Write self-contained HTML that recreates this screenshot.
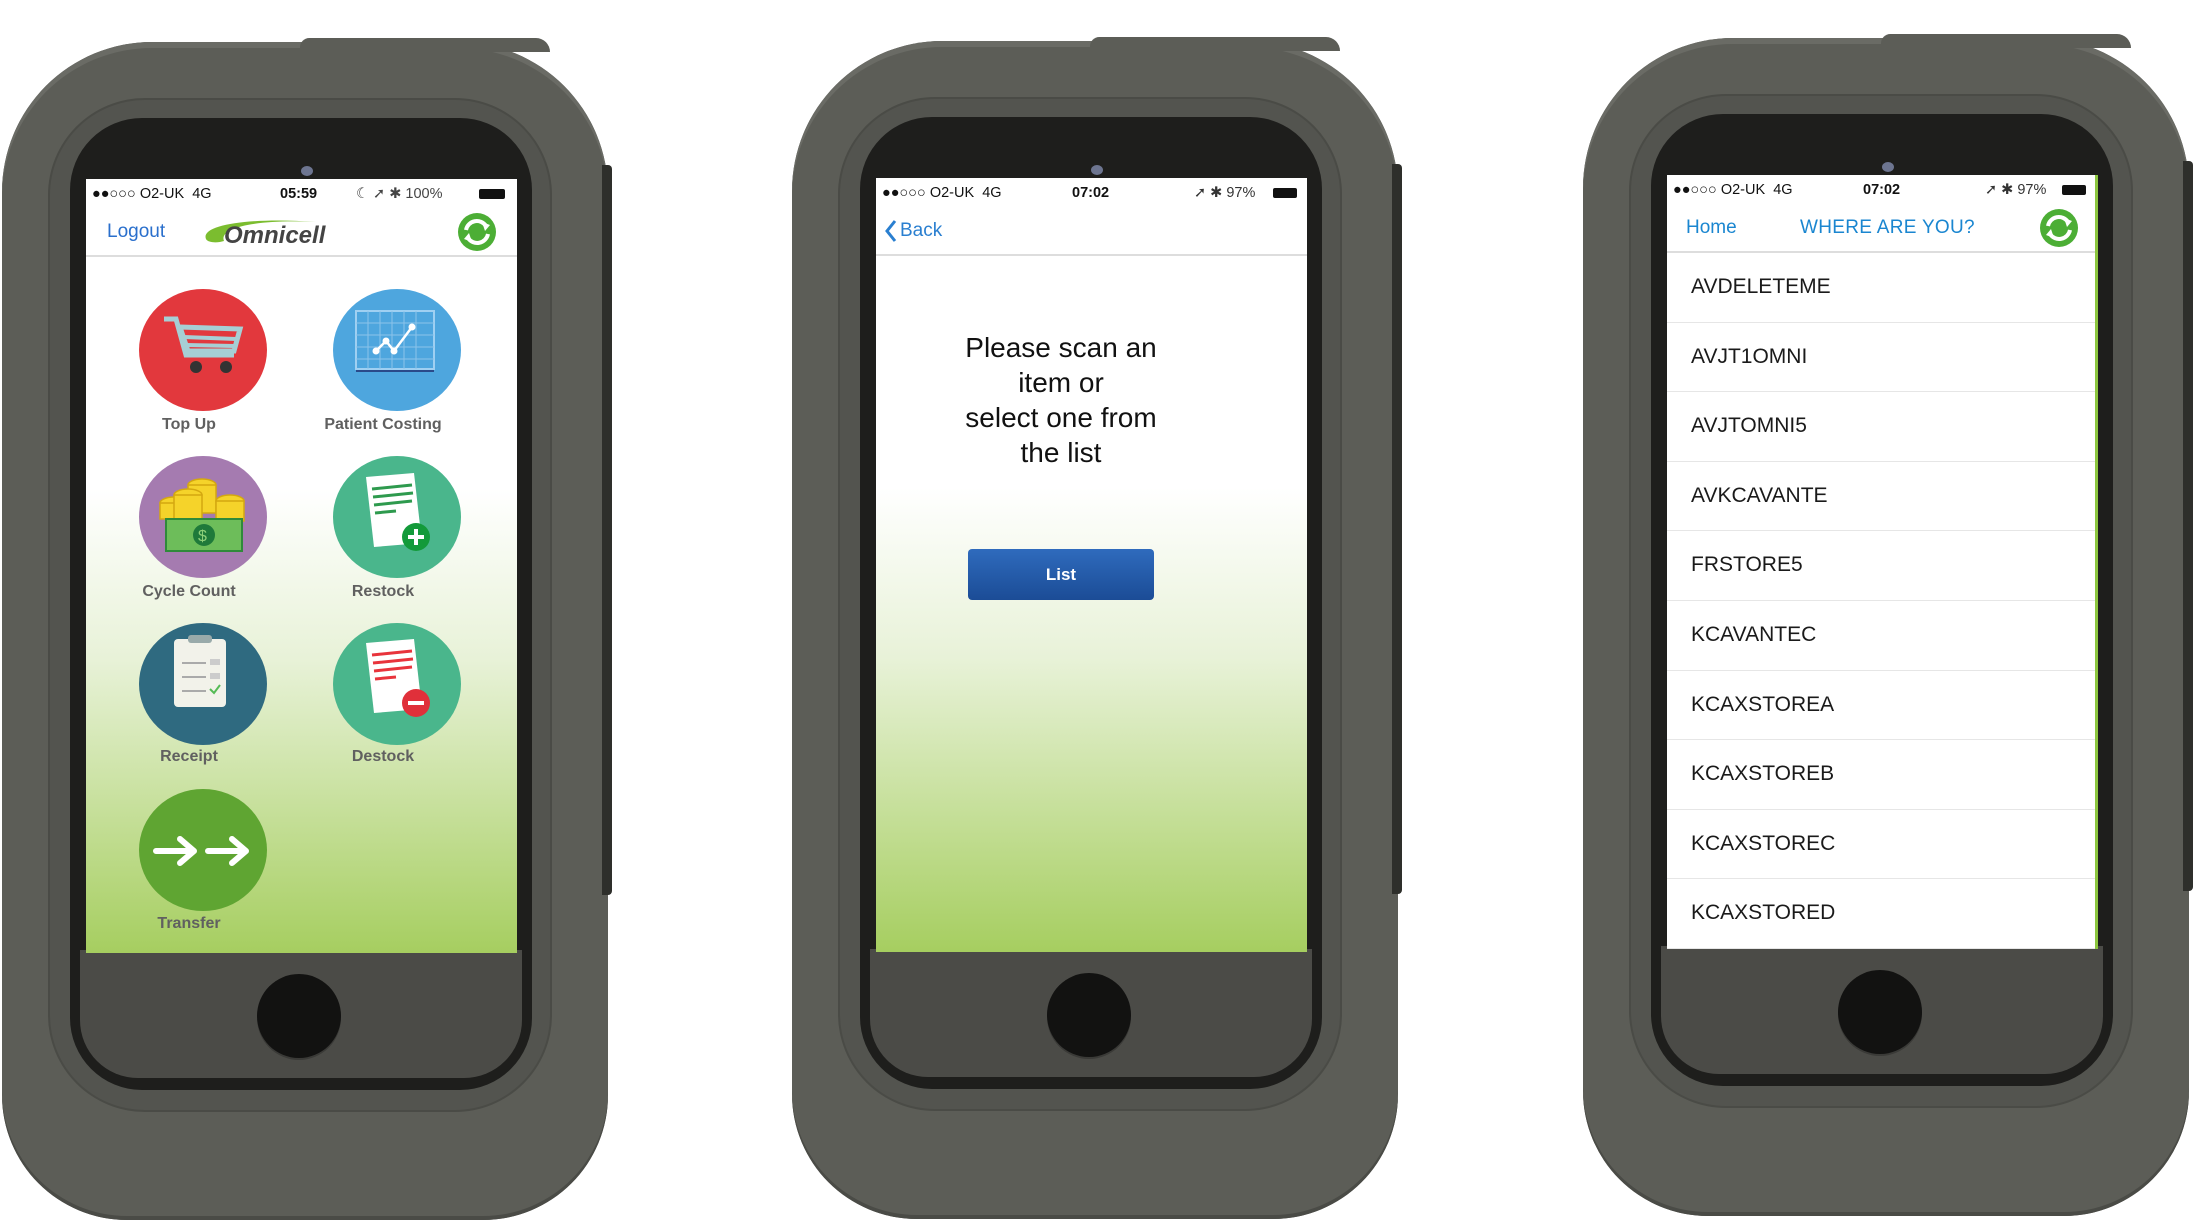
<!DOCTYPE html>
<html><head><meta charset="utf-8"><style>
*{margin:0;padding:0;box-sizing:border-box}
body{width:2198px;height:1221px;background:#fff;position:relative;overflow:hidden;font-family:"Liberation Sans",sans-serif}
.ph{position:absolute;top:0;width:620px;height:1221px}
.case{position:absolute;left:2px;top:42px;width:606px;height:1178px;border-radius:150px 150px 125px 125px;background:#5c5d57;box-shadow:inset 0 6px 0 #6a6b65,inset 0 -4px 0 #4a4b46}
.topbtn{position:absolute;left:300px;top:38px;width:250px;height:14px;background:#5c5d57;border-radius:40px 60px 0 0}
.side{position:absolute;left:602px;top:165px;width:10px;height:730px;background:#2e2f2b;border-radius:0 4px 4px 0}
.ring{position:absolute;left:50px;top:100px;width:500px;height:1010px;border-radius:95px;background:#53544f;box-shadow:0 0 0 2px #4a4b46}
.bez{position:absolute;left:70px;top:118px;width:462px;height:972px;border-radius:72px;background:#1e1e1c}
.home{position:absolute;left:80px;top:950px;width:442px;height:128px;background:#4b4b47;border-radius:0 0 58px 58px}
.hb{position:absolute;left:257px;top:974px;width:84px;height:84px;border-radius:50%;background:#121211;box-shadow:0 2px 0 #3a3a37}
.cam{position:absolute;left:301px;top:166px;width:12px;height:10px;border-radius:50%;background:#6d7590}
.scr{position:absolute;left:86px;top:179px;width:431px;height:774px;overflow:hidden;background:linear-gradient(#fff 0%,#fff 40%,#e8f2d8 62%,#a6ce60 100%)}
.sb{position:absolute;left:0;top:0;width:100%;height:30px;font-size:14.5px;color:#111}
.sb span{position:absolute;top:7px}
.nav{position:absolute;left:0;top:30px;width:100%;height:48px;background:#fff;border-bottom:2px solid #ddd}
.blue{color:#2a6fcc}
.ic{position:absolute;width:128px;height:122px;border-radius:50%}
.lb{position:absolute;width:200px;text-align:center;font-size:16px;font-weight:bold;color:#606060}
.row{height:69.6px;border-bottom:1.5px solid #e6e6e6;font-size:21px;color:#1a1a1a;padding-left:24px;line-height:68px;background:#fff}
</style></head><body>

<div class="ph" style="left:0">
<div class="case"></div><div class="topbtn"></div><div class="side"></div><div class="ring"></div><div class="bez"></div><div class="home"></div><div class="hb"></div><div class="cam"></div>
<div class="scr">
 <div class="sb"><span style="left:6px">●●○○○ O2-UK&nbsp;&nbsp;4G</span><span style="left:194px;font-weight:bold">05:59</span><span style="left:270px;color:#444">☾ ➚ ✱ 100%</span><span style="left:393px;top:10px;width:26px;height:10px;background:#111;border-radius:2px"></span></div>
 <div class="nav">
  <div class="blue" style="position:absolute;left:21px;top:12px;font-size:19px">Logout</div>
  <svg style="position:absolute;left:114px;top:4px" width="150" height="38" viewBox="0 0 150 38"><path d="M6 26 C0 12 50 4 116 9 C60 6 18 14 24 28 C18 30 8 30 6 26Z" fill="#7bbd2f"/><text x="24" y="30" font-family="Liberation Sans" font-style="italic" font-weight="bold" font-size="24" fill="#444">Omnicell</text></svg>
  <svg style="position:absolute;left:371px;top:3px" width="40" height="40" viewBox="0 0 40 40"><circle cx="20" cy="20" r="19" fill="#4cae35"/><path d="M9 18 A11 11 0 0 1 29 14" stroke="#fff" stroke-width="4" fill="none"/><path d="M25 10 L33 13 L28 19Z" fill="#fff"/><path d="M31 22 A11 11 0 0 1 11 26" stroke="#fff" stroke-width="4" fill="none"/><path d="M15 30 L7 27 L12 21Z" fill="#fff"/></svg>
 </div>
 <div class="ic" style="left:53px;top:110px;background:#e2383d"></div>
 <svg style="position:absolute;left:68px;top:120px" width="100" height="100" viewBox="0 0 100 100"><path d="M10 20 L22 20 L32 56 L80 56" stroke="#a6cfd5" stroke-width="5" fill="none"/><path d="M26 28 L86 30 L80 52 L34 52Z" stroke="#a6cfd5" stroke-width="5" fill="none"/><path d="M30 38 L82 40 M32 46 L80 47" stroke="#a6cfd5" stroke-width="4"/><circle cx="42" cy="68" r="6" fill="#333"/><circle cx="72" cy="68" r="6" fill="#333"/></svg>
 <div class="lb" style="left:3px;top:237px">Top Up</div>
 <div class="ic" style="left:247px;top:110px;background:#4ea6de"></div>
 <svg style="position:absolute;left:268px;top:130px" width="84" height="72" viewBox="0 0 84 72"><rect x="2" y="2" width="78" height="58" fill="none" stroke="#9fd0f2" stroke-width="2"/><path d="M2 14H80M2 26H80M2 38H80M2 50H80M14 2V60M26 2V60M38 2V60M50 2V60M62 2V60" stroke="#8cc4ea" stroke-width="1"/><path d="M22 42 L32 32 L40 42 L58 18" stroke="#fff" stroke-width="2.5" fill="none"/><circle cx="22" cy="42" r="3.5" fill="#fff"/><circle cx="32" cy="32" r="3.5" fill="#fff"/><circle cx="40" cy="42" r="3.5" fill="#fff"/><circle cx="58" cy="18" r="3.5" fill="#fff"/><path d="M2 62H80" stroke="#2a4a8a" stroke-width="2"/></svg>
 <div class="lb" style="left:197px;top:237px">Patient Costing</div>
 <div class="ic" style="left:53px;top:277px;background:#a57bb0"></div>
 <svg style="position:absolute;left:66px;top:290px" width="104" height="96" viewBox="0 0 104 96"><g fill="#f5d32a" stroke="#d4a810" stroke-width="1.5"><ellipse cx="22" cy="34" rx="14" ry="6"/><rect x="8" y="34" width="28" height="16"/><ellipse cx="50" cy="16" rx="14" ry="6"/><rect x="36" y="16" width="28" height="28"/><ellipse cx="78" cy="32" rx="14" ry="6"/><rect x="64" y="32" width="28" height="20"/><ellipse cx="36" cy="26" rx="14" ry="6"/><rect x="22" y="26" width="28" height="24"/></g><rect x="14" y="50" width="76" height="32" fill="#6dbd5a" stroke="#2f8a3a" stroke-width="2"/><circle cx="52" cy="66" r="11" fill="#1f7a3a"/><text x="46" y="72" font-size="16" fill="#8fd07a" font-family="Liberation Sans">$</text></svg>
 <div class="lb" style="left:3px;top:404px">Cycle Count</div>
 <div class="ic" style="left:247px;top:277px;background:#4ab68c"></div>
 <svg style="position:absolute;left:270px;top:290px" width="90" height="92" viewBox="0 0 90 92"><path d="M10 8 L58 4 L66 74 L18 78Z" fill="#fff"/><path d="M16 20L56 16M17 28L57 24M18 36L56 32M19 44L40 42" stroke="#2e9a4e" stroke-width="3"/><circle cx="60" cy="68" r="14" fill="#139a3a"/><path d="M52 68H68M60 60V76" stroke="#fff" stroke-width="4"/></svg>
 <div class="lb" style="left:197px;top:404px">Restock</div>
 <div class="ic" style="left:53px;top:444px;background:#2f6a80"></div>
 <svg style="position:absolute;left:80px;top:452px" width="76" height="92" viewBox="0 0 76 92"><rect x="8" y="8" width="52" height="68" rx="4" fill="#f2f2ea"/><rect x="22" y="4" width="24" height="8" rx="3" fill="#9aa"/><path d="M16 32H40M16 46H40M16 60H40" stroke="#aaa" stroke-width="2"/><rect x="44" y="28" width="10" height="6" fill="#ccc"/><rect x="44" y="42" width="10" height="6" fill="#ccc"/><path d="M44 58L48 62L54 54" stroke="#5b5" stroke-width="2" fill="none"/></svg>
 <div class="lb" style="left:3px;top:569px">Receipt</div>
 <div class="ic" style="left:247px;top:444px;background:#4ab68c"></div>
 <svg style="position:absolute;left:270px;top:456px" width="90" height="92" viewBox="0 0 90 92"><path d="M10 8 L58 4 L66 74 L18 78Z" fill="#fff"/><path d="M16 20L56 16M17 28L57 24M18 36L56 32M19 44L40 42" stroke="#e8343c" stroke-width="3"/><circle cx="60" cy="68" r="14" fill="#e0303a"/><path d="M52 68H68" stroke="#fff" stroke-width="4"/></svg>
 <div class="lb" style="left:197px;top:569px">Destock</div>
 <div class="ic" style="left:53px;top:610px;background:#5fa532"></div>
 <svg style="position:absolute;left:66px;top:650px" width="104" height="44" viewBox="0 0 104 44"><path d="M4 22H40M28 10L42 22L28 34M56 22H92M80 10L94 22L80 34" stroke="#fff" stroke-width="6" fill="none" stroke-linecap="round" stroke-linejoin="round"/></svg>
 <div class="lb" style="left:3px;top:736px">Transfer</div>
</div>
</div>

<div class="ph" style="left:790px;top:-1px">
<div class="case"></div><div class="topbtn"></div><div class="side"></div><div class="ring"></div><div class="bez"></div><div class="home"></div><div class="hb"></div><div class="cam"></div>
<div class="scr">
 <div class="sb"><span style="left:6px">●●○○○ O2-UK&nbsp;&nbsp;4G</span><span style="left:196px;font-weight:bold">07:02</span><span style="left:318px;color:#333">➚ ✱ 97%</span><span style="left:397px;top:10px;width:24px;height:10px;background:#111;border-radius:2px"></span></div>
 <div class="nav">
  <svg style="position:absolute;left:8px;top:10px" width="14" height="26" viewBox="0 0 14 26"><path d="M11 3L3 13L11 23" stroke="#2a7fd0" stroke-width="3" fill="none"/></svg>
  <div style="position:absolute;left:24px;top:12px;font-size:19px;color:#2a7fd0">Back</div>
 </div>
 <div style="position:absolute;left:0;top:152px;width:370px;text-align:center;font-size:28px;line-height:35px;color:#111">Please scan an<br>item or<br>select one from<br>the list</div>
 <div style="position:absolute;left:92px;top:371px;width:186px;height:51px;border-radius:4px;background:linear-gradient(#2f6bbd,#1b4c96);color:#fff;font-weight:bold;font-size:17px;text-align:center;line-height:51px">List</div>
</div>
</div>

<div class="ph" style="left:1581px;top:-4px">
<div class="case"></div><div class="topbtn"></div><div class="side"></div><div class="ring"></div><div class="bez"></div><div class="home"></div><div class="hb"></div><div class="cam"></div>
<div class="scr" style="background:#fff;border-right:3px solid #8cc63f">
 <div class="sb"><span style="left:6px">●●○○○ O2-UK&nbsp;&nbsp;4G</span><span style="left:196px;font-weight:bold">07:02</span><span style="left:318px;color:#333">➚ ✱ 97%</span><span style="left:395px;top:10px;width:24px;height:10px;background:#111;border-radius:2px"></span></div>
 <div class="nav">
  <div style="position:absolute;left:19px;top:12px;font-size:19px;color:#1a86d0">Home</div>
  <div style="position:absolute;left:133px;top:12px;font-size:19px;color:#1a86d0;letter-spacing:.3px">WHERE ARE YOU?</div>
  <svg style="position:absolute;left:372px;top:3px" width="40" height="40" viewBox="0 0 40 40"><circle cx="20" cy="20" r="19" fill="#4cae35"/><path d="M9 18 A11 11 0 0 1 29 14" stroke="#fff" stroke-width="4" fill="none"/><path d="M25 10 L33 13 L28 19Z" fill="#fff"/><path d="M31 22 A11 11 0 0 1 11 26" stroke="#fff" stroke-width="4" fill="none"/><path d="M15 30 L7 27 L12 21Z" fill="#fff"/></svg>
 </div>
 <div style="position:absolute;left:0;top:78px;width:100%">
  <div class="row">AVDELETEME</div><div class="row">AVJT1OMNI</div><div class="row">AVJTOMNI5</div><div class="row">AVKCAVANTE</div><div class="row">FRSTORE5</div><div class="row">KCAVANTEC</div><div class="row">KCAXSTOREA</div><div class="row">KCAXSTOREB</div><div class="row">KCAXSTOREC</div><div class="row">KCAXSTORED</div>
 </div>
</div>
</div>
</body></html>
